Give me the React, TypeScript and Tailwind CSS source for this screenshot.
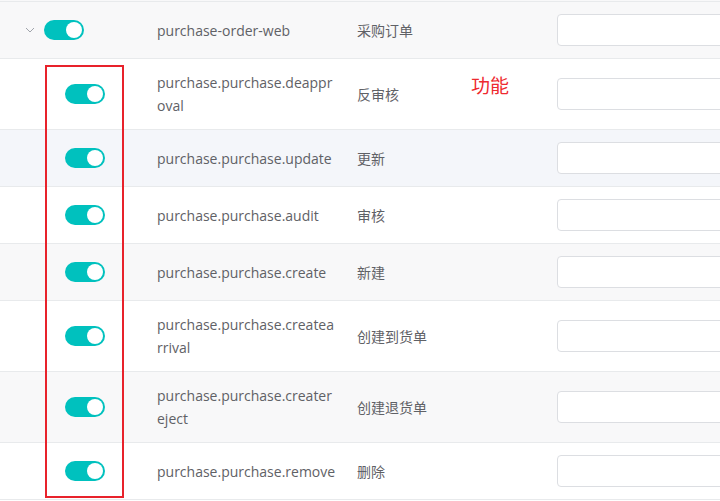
import React from "react";

type Perm = { code: string; name: string; bg: string; child: boolean };

const rows: Perm[] = [
  { code: "purchase-order-web", name: "采购订单", bg: "bg-[#f8f8f9]", child: false },
  { code: "purchase.purchase.deapproval", name: "反审核", bg: "bg-white", child: true },
  { code: "purchase.purchase.update", name: "更新", bg: "bg-[#f4f6fa]", child: true },
  { code: "purchase.purchase.audit", name: "审核", bg: "bg-white", child: true },
  { code: "purchase.purchase.create", name: "新建", bg: "bg-[#f8f8f9]", child: true },
  { code: "purchase.purchase.createarrival", name: "创建到货单", bg: "bg-white", child: true },
  { code: "purchase.purchase.createreject", name: "创建退货单", bg: "bg-[#f8f8f9]", child: true },
  { code: "purchase.purchase.remove", name: "删除", bg: "bg-white", child: true },
];

function Toggle() {
  return (
    <span className="flex h-5 w-10 items-center justify-end rounded-full bg-[#00c1be] pr-[2px]">
      <span className="h-4 w-4 rounded-full bg-white" />
    </span>
  );
}

function Chevron() {
  return (
    <svg width="10" height="6" viewBox="0 0 10 6" className="text-[#a0a4ab]">
      <path d="M1 1l4 4 4-4" fill="none" stroke="currentColor" strokeWidth="1" />
    </svg>
  );
}

export default function App() {
  return (
    <div
      className="relative h-[501px] w-[720px] overflow-hidden bg-white text-[14px] text-[#5f6166]"
      style={{ fontFamily: '"Open Sans", "Noto Sans CJK SC", sans-serif' }}
    >
      <div className="h-px bg-[#f8f8f9]" />
      <div className="border-t border-[#e8eaec]">
        {rows.map((r) => (
          <div key={r.code} className={`flex border-b border-[#e8eaec] ${r.bg}`}>
            {/* switch column */}
            <div className="flex w-[139px] shrink-0 items-center py-3">
              {r.child ? (
                <span className="pl-[65px]">
                  <Toggle />
                </span>
              ) : (
                <span className="flex items-center gap-[9px] pl-[25px]">
                  <Chevron />
                  <Toggle />
                </span>
              )}
            </div>
            {/* code column */}
            <div className="flex w-[200px] shrink-0 items-center py-3 pl-[18px] pr-[1px]">
              <span className="break-all leading-[23px]">{r.code}</span>
            </div>
            {/* name column */}
            <div className="flex w-[200px] shrink-0 items-center px-[18px] py-3">
              <span className="leading-[23px]">{r.name}</span>
            </div>
            {/* input column */}
            <div className="flex flex-1 items-center py-3 pl-[18px]">
              <input
                type="text"
                className="h-8 w-[200px] rounded-[4px] border border-[#dcdee2] bg-white"
              />
            </div>
          </div>
        ))}
      </div>

      {/* annotation overlay */}
      <div className="absolute left-[45px] top-[65px] h-[433px] w-[79px] border-2 border-[#e8222b]" />
      <div className="absolute left-[471px] top-[73px] text-[19px] leading-[26px] text-[#ee2a2f]">功能</div>
    </div>
  );
}
